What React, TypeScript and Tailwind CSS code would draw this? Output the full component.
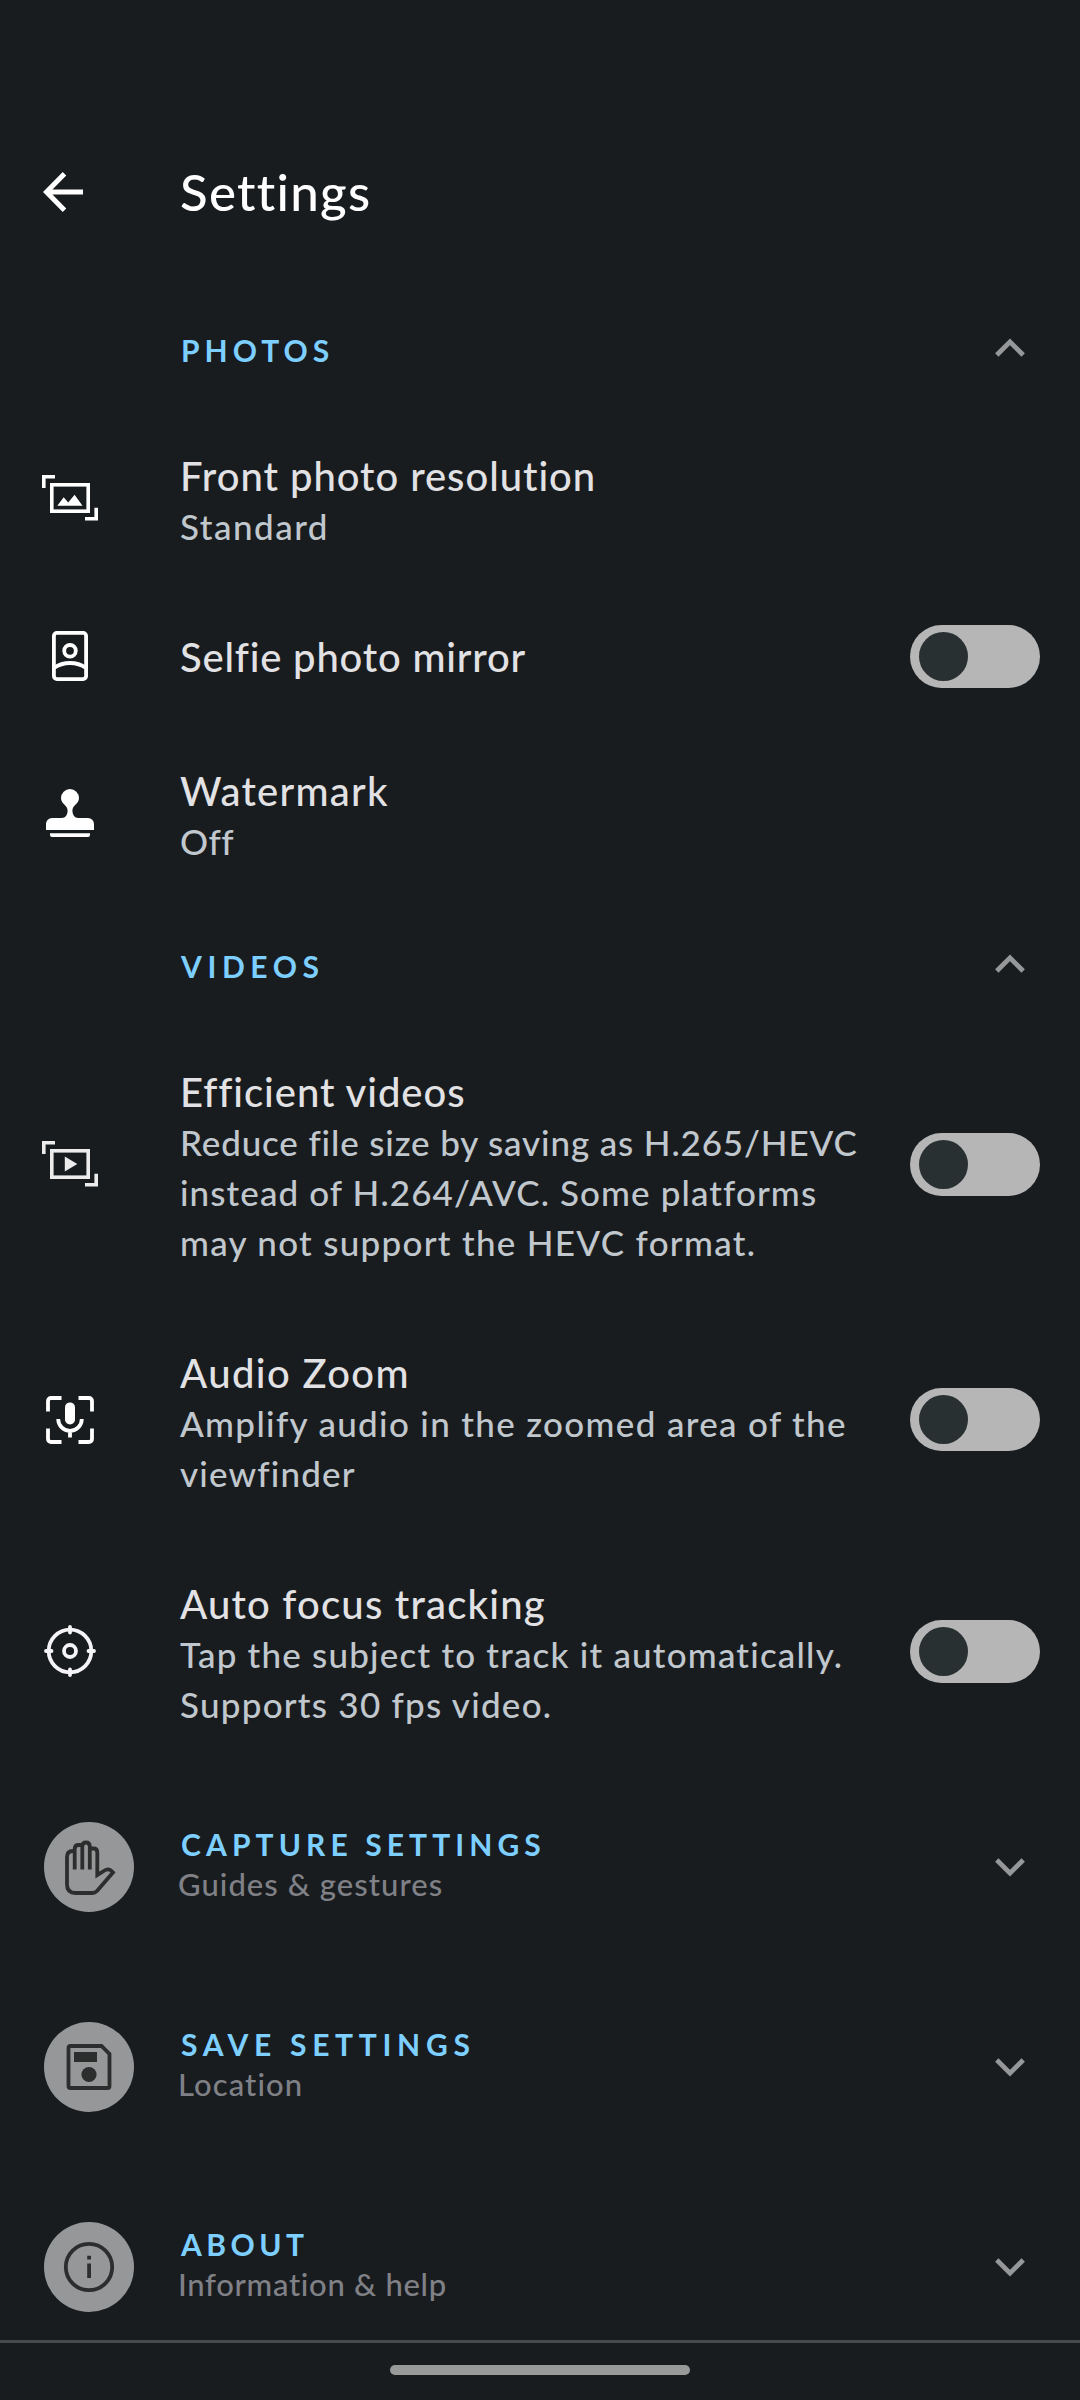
import clsx from "clsx";
import { useState } from "react";
import type { ReactNode } from "react";

const Frame = ({ children, className }: { children: ReactNode; className: string }) => (
  <svg width="56" height="50" viewBox="0 0 56 50" className={className}>
    <path d="M1.8 15V3.8H13M54.2 34.8V45.8H43" fill="none" stroke="currentColor" strokeWidth="3.6" />
    <rect x="9.8" y="11.8" width="36.4" height="26.4" fill="none" stroke="currentColor" strokeWidth="3.6" />
    {children}
  </svg>
);

const ResolutionIcon = () => (
  <Frame className="text-white">
    <path d="M15.3 32.7 21.7 24.3 26.2 29.4 32.6 21.8 40.5 32.7Z" fill="currentColor" />
  </Frame>
);

const VideoIcon = () => (
  <Frame className="text-[#ececec]">
    <path d="M22.8 17.5V32.5L35.3 25Z" fill="currentColor" />
  </Frame>
);

const SelfieIcon = () => (
  <svg width="56" height="56" viewBox="0 0 56 56" fill="none" stroke="white" strokeWidth="3.8">
    <rect x="11.9" y="4.9" width="32.2" height="46.2" rx="3" />
    <circle cx="28" cy="22.8" r="5.8" />
    <path d="M12 40Q19 35 28 35T44 40" />
  </svg>
);

const StampIcon = () => (
  <svg width="56" height="56" viewBox="0 0 56 56" fill="white">
    <path d="M28 4a9 9 0 0 1 9 9c0 6-6.600 7-6.600 12.500 0 4 2 7.500 6 7.500H46a6 6 0 0 1 6 6v6H4v-6a6 6 0 0 1 6-6h9.600c4 0 6-3.500 6-7.500 0-5.500-6.600-6.500-6.600-12.500a9 9 0 0 1 9-9Z" />
    <path d="M8 48.300H48v1.700a2 2 0 0 1-2 2H10a2 2 0 0 1-2-2Z" />
  </svg>
);

const AudioIcon = () => (
  <svg width="56" height="56" viewBox="0 0 56 56" fill="none" stroke="white" strokeWidth="3.8">
    <path d="M6 19.500V9a3 3 0 0 1 3-3H19.500M36.500 6H47a3 3 0 0 1 3 3V19.500M50 36.500V47a3 3 0 0 1-3 3H36.500M19.500 50H9a3 3 0 0 1-3-3V36.500" />
    <rect x="23" y="10.400" width="10" height="22" rx="5" fill="white" stroke="none" />
    <path d="M16.200 27a11.800 11.800 0 0 0 23.600 0M28 38V45.500" />
  </svg>
);

const TargetIcon = () => (
  <svg width="56" height="56" viewBox="0 0 56 56" fill="none" stroke="#f4f4f6" strokeWidth="3.8" strokeLinecap="round">
    <circle cx="28" cy="28" r="21.300" />
    <circle cx="28" cy="28" r="6" />
    <path d="M28 4V9.500M28 46.500V52M4 28H9.500M46.500 28H52" />
  </svg>
);

const HandIcon = () => (
  <svg width="90" height="90" viewBox="0 0 90 90" fill="none" stroke="#2c2e2e" strokeWidth="3.8">
    <path d="M31 29H29Q23 29 23 35V62.500Q23 71 31.500 71H48.500Q51 71 53 69L69 50.500Q65 45.500 60.500 48.500L53.300 53V30.500Q53.300 26.500 49.500 26.500H46" />
    <path d="M30.700 47.500V27Q30.700 23 34.500 23H38M38.300 47.500V24.500Q38.300 20.500 42 20.500T45.800 24.500V47.500" />
  </svg>
);

const SaveIcon = () => (
  <svg width="90" height="90" viewBox="0 0 90 90">
    <path d="M26.500 24H57.500L65.500 32V64a2 2 0 0 1-2 2H26.500a2 2 0 0 1-2-2V26a2 2 0 0 1 2-2Z" fill="none" stroke="#2c2e2e" strokeWidth="3.8" />
    <path d="M30 30H53V40H30Z" fill="#2c2e2e" />
    <circle cx="45" cy="52.500" r="7.600" fill="#2c2e2e" />
  </svg>
);

const InfoIcon = () => (
  <svg width="90" height="90" viewBox="0 0 90 90">
    <circle cx="45" cy="45" r="23.200" fill="none" stroke="#2c2e2e" strokeWidth="3.8" />
    <path d="M43.200 41.500H47V56H43.200ZM43.200 33.800H47V37.500H43.200Z" fill="#2c2e2e" />
  </svg>
);

const Chevron = ({ open }: { open?: boolean }) => (
  <svg width="32" height="20" viewBox="0 0 32 20" fill="none" stroke="#969798" strokeWidth="4.8">
    <path d={open ? "M2.800 17 16 3.800 29.200 17" : "M2.800 3 16 16.200 29.200 3"} />
  </svg>
);

const Toggle = () => {
  const [on, setOn] = useState(false);
  return (
    <button
      type="button"
      role="switch"
      aria-checked={on}
      onClick={() => setOn(!on)}
      className={clsx(
        "flex h-[63px] w-[130px] shrink-0 items-center rounded-full bg-[#b6b6b6] px-[9px]",
        on && "justify-end",
      )}
    >
      <span className="size-[49px] rounded-full bg-[#293032]" />
    </button>
  );
};

const SectionHeader = ({ title, className }: { title: string; className: string }) => (
  <button type="button" className="flex h-[120px] w-full shrink-0 items-center pr-[54px] pl-[181px]">
    <span className={clsx("flex-1 text-left text-[30px] leading-[40px] font-bold whitespace-nowrap text-[#7dcfff]", className)}>
      {title}
    </span>
    <div className="pb-1">
      <Chevron open />
    </div>
  </button>
);

interface RowProps {
  icon: ReactNode;
  iconClass?: string;
  title: string;
  titleClass: string;
  lines?: { text: string; className: string }[];
  textClass?: string;
  toggle?: boolean;
  className: string;
}

const Row = ({ icon, iconClass, title, titleClass, lines = [], textClass, toggle, className }: RowProps) => (
  <div className={clsx("flex shrink-0 items-center pr-10 pl-[42px]", className)}>
    <div className={clsx("flex w-[138px] shrink-0", iconClass)}>{icon}</div>
    <div className={clsx("flex-1 font-medium whitespace-nowrap", textClass)}>
      <div className={clsx("text-[40px] leading-[50px] text-[#e2e2e5]", titleClass)}>{title}</div>
      {lines.map((line) => (
        <div key={line.text} className={clsx("text-[35px] leading-[50px] text-[#c0c7cd]", line.className)}>
          {line.text}
        </div>
      ))}
    </div>
    {toggle && <Toggle />}
  </div>
);

interface GroupProps {
  icon: ReactNode;
  title: string;
  titleClass: string;
  summary: string;
  summaryClass: string;
}

const Group = ({ icon, title, titleClass, summary, summaryClass }: GroupProps) => (
  <button type="button" className="flex h-[200px] w-full items-center pr-[54px] pl-11 text-left">
    <div className="size-[90px] shrink-0 rounded-full bg-[#969798]">{icon}</div>
    <div className="ml-11 flex-1 pb-[6px] whitespace-nowrap">
      <div className={clsx("ml-[3px] text-[30px] leading-[40px] font-bold text-[#7dcfff]", titleClass)}>{title}</div>
      <div className={clsx("text-[31px] leading-[40px] font-medium text-[#808187]", summaryClass)}>{summary}</div>
    </div>
    <Chevron />
  </button>
);

export default function App() {
  return (
    <main className="flex h-[2400px] w-[1080px] flex-col overflow-hidden bg-[#191c1f] font-['Lato',sans-serif]">
      <header className="flex h-[290px] shrink-0 items-center pt-[94px] pl-[43px]">
        <svg width="40" height="40" viewBox="0 0 40 40" fill="none" stroke="white" strokeWidth="5">
          <path d="M21.500 1.800 3.500 20 21.500 38.200M3.500 20H40" />
        </svg>
        <h1 className="ml-[97px] text-[51px] leading-[60px] font-medium tracking-[1.3px] text-white">Settings</h1>
      </header>

      <SectionHeader title="PHOTOS" className="tracking-[5px]" />
      <Row
        className="h-[182px]"
        icon={<ResolutionIcon />}
        iconClass="pb-[6px]"
        title="Front photo resolution"
        titleClass="tracking-[0.95px]"
        lines={[{ text: "Standard", className: "tracking-[1.5px]" }]}
      />
      <Row
        className="h-[128px]"
        icon={<SelfieIcon />}
        title="Selfie photo mirror"
        titleClass="tracking-[0.8px]"
        textClass="pt-[2px]"
        toggle
      />
      <Row
        className="h-[186px]"
        icon={<StampIcon />}
        textClass="pt-[5px]"
        title="Watermark"
        titleClass="tracking-[1.25px]"
        lines={[{ text: "Off", className: "tracking-[0.5px]" }]}
      />

      <SectionHeader title="VIDEOS" className="tracking-[5.6px]" />
      <Row
        className="h-[277px]"
        icon={<VideoIcon />}
        iconClass="pb-[1px]"
        title="Efficient videos"
        titleClass="tracking-[0.95px]"
        textClass="pt-[4px]"
        lines={[
          { text: "Reduce file size by saving as H.265/HEVC", className: "tracking-[0.85px]" },
          { text: "instead of H.264/AVC. Some platforms", className: "tracking-[1.1px]" },
          { text: "may not support the HEVC format.", className: "tracking-[1.3px]" },
        ]}
        toggle
      />
      <Row
        className="h-[233px]"
        icon={<AudioIcon />}
        title="Audio Zoom"
        titleClass="tracking-[1.4px]"
        textClass="pt-[6px]"
        lines={[
          { text: "Amplify audio in the zoomed area of the", className: "tracking-[1.33px]" },
          { text: "viewfinder", className: "tracking-[1.15px]" },
        ]}
        toggle
      />
      <Row
        className="h-[231px]"
        icon={<TargetIcon />}
        iconClass="pb-[1px]"
        title="Auto focus tracking"
        titleClass="tracking-[1.2px]"
        textClass="pt-[5px]"
        lines={[
          { text: "Tap the subject to track it automatically.", className: "tracking-[1.2px]" },
          { text: "Supports 30 fps video.", className: "tracking-[1.25px]" },
        ]}
        toggle
      />

      {/* the last group scrolls under the navigation bar */}
      <div className="h-[573px] shrink-0 overflow-hidden">
        <Group icon={<HandIcon />} title="CAPTURE SETTINGS" titleClass="tracking-[5.1px]" summary="Guides & gestures" summaryClass="tracking-[1.05px]" />
        <Group icon={<SaveIcon />} title="SAVE SETTINGS" titleClass="tracking-[5.7px]" summary="Location" summaryClass="tracking-[1.1px]" />
        <Group icon={<InfoIcon />} title="ABOUT" titleClass="tracking-[4.5px]" summary="Information & help" summaryClass="tracking-[0.7px]" />
      </div>

      <footer className="flex flex-1 justify-center border-t-3 border-[#48494c] pt-[22px]">
        <div className="h-[10px] w-[300px] rounded-full bg-[#989a99]" />
      </footer>
    </main>
  );
}
